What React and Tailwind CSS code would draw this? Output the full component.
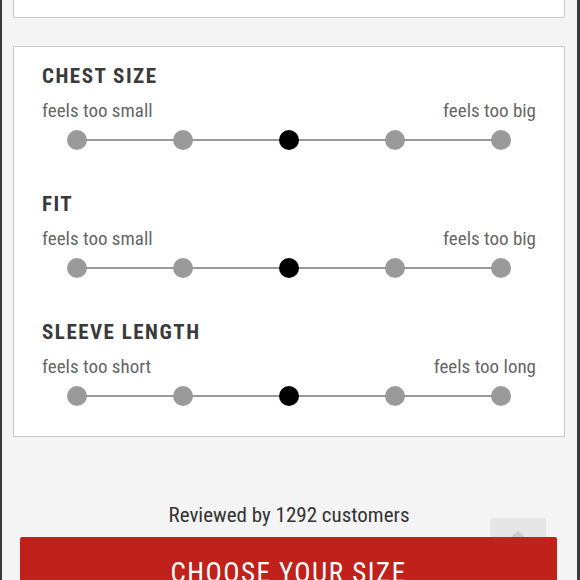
/**
 * Fit feedback panel: three slider rows (chest, fit, sleeve), review count, red CTA.
 */
const font = { fontFamily: '"Liberation Sans Narrow", "Roboto Condensed", Roboto, sans-serif' };

const rows = [
  { title: 'CHEST SIZE', left: 'feels too small', right: 'feels too big', value: 2 },
  { title: 'FIT', left: 'feels too small', right: 'feels too big', value: 2 },
  { title: 'SLEEVE LENGTH', left: 'feels too short', right: 'feels too long', value: 2 },
];

function Scale({ value }) {
  return (
    <div className="relative mt-[8px] h-[20px] px-[25px]">
      <div className="relative flex h-full items-center justify-between">
        <div className="absolute left-[10px] right-[10px] top-[9px] h-[2px] bg-[#9a9a9a]" />
        {[0, 1, 2, 3, 4].map((i) => (
          <span
            key={i}
            className={
              i === value
                ? 'relative h-[20px] w-[20px] rounded-full bg-black'
                : 'relative h-[20px] w-[20px] rounded-full bg-[#9a9a9a]'
            }
          />
        ))}
      </div>
    </div>
  );
}

export default function App() {
  return (
    <div
      className="relative flex h-[580px] w-[580px] flex-col overflow-hidden border-l-2 border-r-[3px] border-[#3a3a3a] bg-[#f4f4f4] pl-[11px] pr-[12px]"
      style={font}
    >
      {/* top card (cut off) */}
      <div className="h-[18px] shrink-0 rounded-b-[2px] border-x border-b border-[#c8c8c8] bg-white" />

      {/* fit card */}
      <div className="mt-[28px] shrink-0 border border-[#c8c8c8] bg-white px-[28px] pb-[30px] pt-[17px]">
        {rows.map((row, idx) => (
          <div key={row.title} className={idx > 0 ? 'mt-[42px]' : ''}>
            <h3 className="h-[24px] text-[21px] font-bold leading-[24px] tracking-[1.5px] text-[#3a3a3a]">
              {row.title}
            </h3>
            <div className="mt-[12px] flex justify-between text-[19px] leading-[22px] text-[#666]">
              <span>{row.left}</span>
              <span>{row.right}</span>
            </div>
            <Scale value={row.value} />
          </div>
        ))}
      </div>

      <p className="mt-[66px] text-center text-[21px] leading-[24px] text-[#333]">
        Reviewed by 1292 customers
      </p>

      {/* scroll-to-top tab, sits behind the button */}
      <div className="absolute left-[488px] top-[518px] flex h-[40px] w-[56px] justify-center rounded-[2px] bg-[#e6e6e6]">
        <span className="mt-[13px] h-0 w-0 border-x-[8px] border-b-[7px] border-x-transparent border-b-[#cccccc]" />
      </div>

      <button
        type="button"
        className="relative ml-[7px] mr-[8px] mt-[10px] h-[60px] shrink-0 rounded-[2px] bg-[#c0211a] pt-[12px] text-[27px] leading-[32px] tracking-[1.5px] text-white"
      >
        CHOOSE YOUR SIZE
      </button>
    </div>
  );
}
